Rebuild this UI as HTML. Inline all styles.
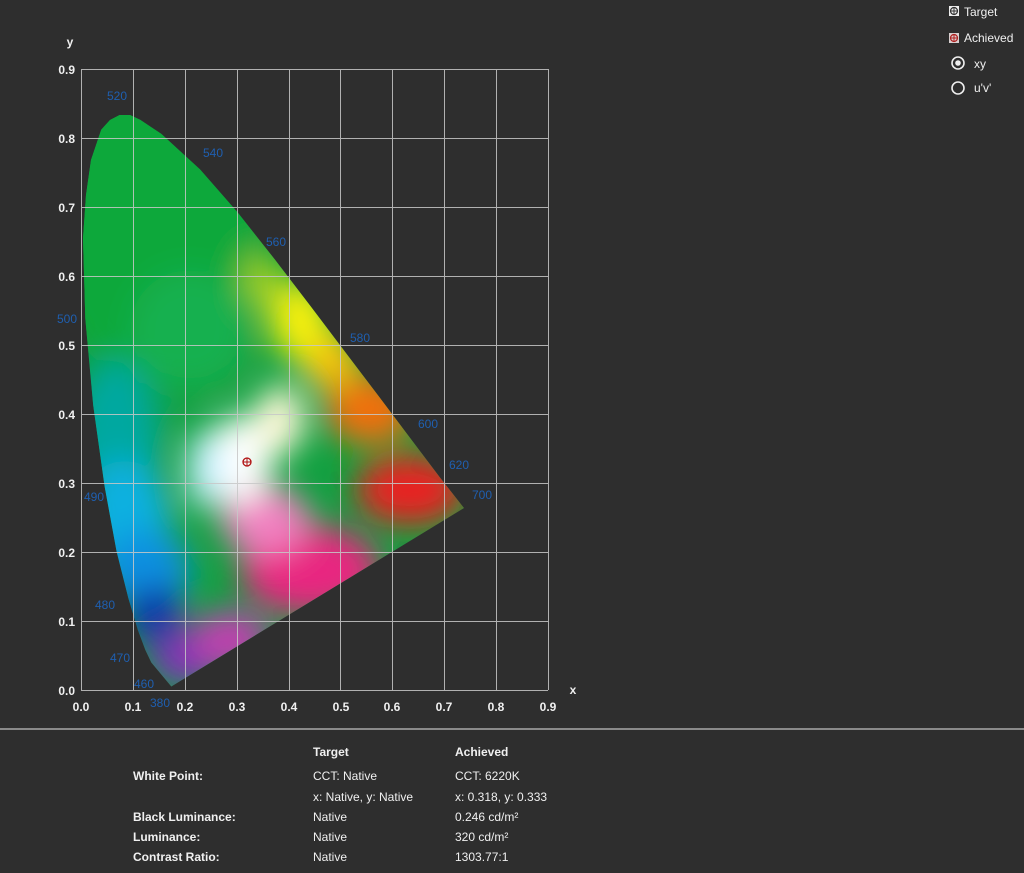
<!DOCTYPE html>
<html><head><meta charset="utf-8"><style>
body{margin:0;width:1024px;height:873px;background:#2e2e2e;font-family:"Liberation Sans",sans-serif;overflow:hidden;position:relative;color:#fff}
.t{position:absolute;font-size:12px;color:#f0f0f0}
.b{font-weight:bold}
</style></head><body>
<svg width="1024" height="730" style="position:absolute;left:0;top:0">
<defs>
<clipPath id="c"><path d="M171.3,686.5 L151.3,662.5 L145.4,650.1 L137.9,630.1 L128.4,598.4 L116.6,551.5 L104.6,486.4 L93.2,405.2 L85.3,318.5 L83,238.2 L86,195 L91,160 L101.2,129.7 L110,120 L119.6,115 L130,115 L140.3,119.9 L161.3,133.9 L200.1,169.5 L237.5,212.3 L274.6,259.1 L311.4,307.3 L346.9,354.2 L379.5,397.3 L406.4,433 L439.8,477.3 L464,508 Z"/></clipPath>
<filter id="bl"><feGaussianBlur stdDeviation="16"/></filter>
</defs>
<g clip-path="url(#c)">
<rect x="60" y="100" width="420" height="600" fill="#10a040"/>
<g filter="url(#bl)">
<ellipse cx="150" cy="220" rx="110" ry="160" fill="#0aa83a"/>
<ellipse cx="190" cy="330" rx="60" ry="60" fill="#18b050"/>
<ellipse cx="115" cy="440" rx="45" ry="80" fill="#00a8a0"/>
<ellipse cx="125" cy="520" rx="45" ry="60" fill="#10b0e0"/>
<ellipse cx="145" cy="570" rx="45" ry="40" fill="#1090e0"/>
<ellipse cx="155" cy="615" rx="30" ry="30" fill="#0838a8"/>
<ellipse cx="185" cy="660" rx="35" ry="25" fill="#8030b8"/>
<ellipse cx="230" cy="640" rx="40" ry="30" fill="#c040b0"/>
<ellipse cx="310" cy="570" rx="70" ry="45" fill="#e82880"/>
<ellipse cx="410" cy="490" rx="55" ry="35" fill="#e82020"/>
<ellipse cx="370" cy="410" rx="45" ry="35" fill="#f07010"/>
<ellipse cx="330" cy="360" rx="30" ry="30" fill="#f8c010"/>
<ellipse cx="300" cy="320" rx="30" ry="40" fill="#f8f010"/>
<ellipse cx="262" cy="280" rx="18" ry="28" fill="#a0d020"/>
<ellipse cx="265" cy="520" rx="45" ry="35" fill="#f080c0"/>
<ellipse cx="240" cy="460" rx="32" ry="45" fill="#ffffff"/>
<ellipse cx="280" cy="420" rx="25" ry="35" fill="#fff8d8"/>
<ellipse cx="205" cy="470" rx="18" ry="40" fill="#c8f0ff"/>
</g>
</g>
<g stroke="#c8c8c8" stroke-width="1" opacity="0.85">
<path d="M81.5,69V690M133.5,69V690M185.5,69V690M237.5,69V690M289.5,69V690M340.5,69V690M392.5,69V690M444.5,69V690M496.5,69V690M548.5,69V690"/>
<path d="M81,69.5H548M81,138.5H548M81,207.5H548M81,276.5H548M81,345.5H548M81,414.5H548M81,483.5H548M81,552.5H548M81,621.5H548M81,690.5H548"/>
</g>
<g font-size="12" font-weight="bold" fill="#f0f0f0" text-anchor="end">
<text x="75" y="74">0.9</text><text x="75" y="143">0.8</text><text x="75" y="212">0.7</text><text x="75" y="281">0.6</text><text x="75" y="350">0.5</text><text x="75" y="419">0.4</text><text x="75" y="488">0.3</text><text x="75" y="557">0.2</text><text x="75" y="626">0.1</text><text x="75" y="695">0.0</text>
</g>
<g font-size="12" font-weight="bold" fill="#f0f0f0" text-anchor="middle">
<text x="81" y="711">0.0</text><text x="133" y="711">0.1</text><text x="185" y="711">0.2</text><text x="237" y="711">0.3</text><text x="289" y="711">0.4</text><text x="341" y="711">0.5</text><text x="392" y="711">0.6</text><text x="444" y="711">0.7</text><text x="496" y="711">0.8</text><text x="548" y="711">0.9</text>
<text x="70" y="46">y</text><text x="573" y="694">x</text>
</g>
<g font-size="12" fill="#1f5fb0">
<text x="107" y="100">520</text><text x="203" y="157">540</text><text x="266" y="246">560</text><text x="350" y="342">580</text><text x="418" y="428">600</text><text x="449" y="469">620</text><text x="472" y="499">700</text>
<text x="57" y="323">500</text><text x="84" y="501">490</text><text x="95" y="609">480</text><text x="110" y="662">470</text><text x="134" y="688">460</text><text x="150" y="707">380</text>
</g>
<circle cx="247" cy="462" r="4" fill="none" stroke="#b01010" stroke-width="1.3"/>
<path d="M243,462H251M247,458V466" stroke="#b01010" stroke-width="1"/>
<rect x="0" y="728" width="1024" height="2" fill="#8a8a8a"/>
</svg>
<svg width="80" height="100" style="position:absolute;left:940px;top:0">
<rect x="9" y="6" width="10" height="10" fill="#eee"/><circle cx="14" cy="11" r="3.5" fill="none" stroke="#333" stroke-width="1.2"/><path d="M10,11H18M14,7V15" stroke="#333"/>
<rect x="9" y="33" width="10" height="10" fill="#d8d0d0"/><circle cx="14" cy="38" r="3.5" fill="none" stroke="#b02020" stroke-width="1.2"/><path d="M10,38H18M14,34V42" stroke="#b02020"/>
<circle cx="18" cy="63" r="6" fill="none" stroke="#eee" stroke-width="1.6"/><circle cx="18" cy="63" r="2.8" fill="#eee"/>
<circle cx="18" cy="88" r="6" fill="none" stroke="#eee" stroke-width="1.6"/>
</svg>
<div class="t" style="left:964px;top:5px">Target</div>
<div class="t" style="left:964px;top:31px">Achieved</div>
<div class="t" style="left:974px;top:57px">xy</div>
<div class="t" style="left:974px;top:81px">u'v'</div>
<div class="t b" style="left:313px;top:745px">Target</div>
<div class="t b" style="left:455px;top:745px">Achieved</div>
<div class="t b" style="left:133px;top:769px">White Point:</div>
<div class="t" style="left:313px;top:769px">CCT: Native</div>
<div class="t" style="left:455px;top:769px">CCT: 6220K</div>
<div class="t" style="left:313px;top:790px">x: Native, y: Native</div>
<div class="t" style="left:455px;top:790px">x: 0.318, y: 0.333</div>
<div class="t b" style="left:133px;top:810px">Black Luminance:</div>
<div class="t" style="left:313px;top:810px">Native</div>
<div class="t" style="left:455px;top:810px">0.246 cd/m²</div>
<div class="t b" style="left:133px;top:830px">Luminance:</div>
<div class="t" style="left:313px;top:830px">Native</div>
<div class="t" style="left:455px;top:830px">320 cd/m²</div>
<div class="t b" style="left:133px;top:850px">Contrast Ratio:</div>
<div class="t" style="left:313px;top:850px">Native</div>
<div class="t" style="left:455px;top:850px">1303.77:1</div>
</body></html>
